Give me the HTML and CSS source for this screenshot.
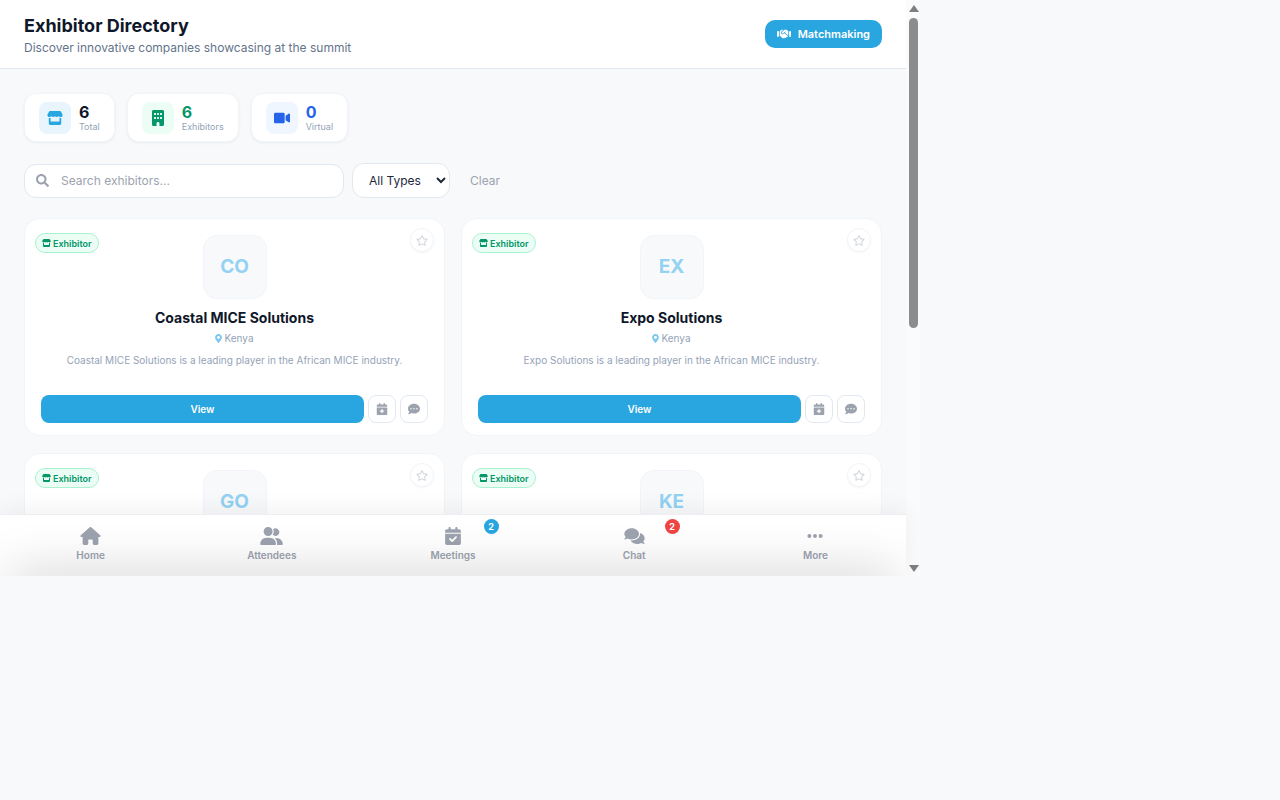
FILE: index.html
```html
<!DOCTYPE html>
<html lang="en">
<head>
    <meta charset="UTF-8">
    <meta name="viewport" content="width=device-width, initial-scale=1.0">
    <title>Exhibitor Directory</title>
    <link rel="stylesheet" href="styles.css">
</head>
<body>
    <svg class="icon-defs" aria-hidden="true">
        <symbol id="i-store" viewBox="0 0 576 512"><path d="M547.600 103.800L490.300 13.100C485.200 5 476.100 0 466.400 0H109.600C99.900 0 90.800 5 85.700 13.100L28.300 103.800c-29.600 46.800-3.400 111.900 51.900 119.400c4 .5 8.100 .8 12.100 .8c26.100 0 49.300-11.400 65.200-29c15.900 17.600 39.100 29 65.200 29c26.100 0 49.300-11.400 65.200-29c15.900 17.600 39.100 29 65.200 29c26.200 0 49.300-11.400 65.200-29c16 17.600 39.100 29 65.200 29c4.100 0 8.100-.3 12.100-.8c55.500-7.400 81.800-72.500 52.100-119.400zM499.700 254.900l-.1 0c-5.300 .7-10.700 1.100-16.200 1.100c-12.400 0-24.300-1.900-35.400-5.300V384H128V250.600c-11.200 3.500-23.200 5.400-35.600 5.400c-5.500 0-11-.4-16.300-1.100l-.1 0c-4.100-.6-8.100-1.300-12-2.300V384v64c0 35.300 28.700 64 64 64H448c35.300 0 64-28.700 64-64V384 252.600c-4 1-8 1.800-12.300 2.300z"/></symbol>
        <symbol id="i-building" viewBox="0 0 384 512"><path d="M48 0C21.500 0 0 21.500 0 48V464c0 26.500 21.500 48 48 48h96V432c0-26.500 21.500-48 48-48s48 21.500 48 48v80h96c26.500 0 48-21.500 48-48V48c0-26.500-21.500-48-48-48H48zM64 240c0-8.800 7.200-16 16-16h32c8.800 0 16 7.200 16 16v32c0 8.800-7.200 16-16 16H80c-8.800 0-16-7.200-16-16V240zm112-16h32c8.800 0 16 7.200 16 16v32c0 8.800-7.200 16-16 16H176c-8.800 0-16-7.200-16-16V240c0-8.800 7.200-16 16-16zm80 16c0-8.800 7.200-16 16-16h32c8.800 0 16 7.200 16 16v32c0 8.800-7.200 16-16 16H272c-8.800 0-16-7.200-16-16V240zM80 96h32c8.800 0 16 7.200 16 16v32c0 8.800-7.200 16-16 16H80c-8.800 0-16-7.200-16-16V112c0-8.800 7.200-16 16-16zm80 16c0-8.800 7.200-16 16-16h32c8.800 0 16 7.200 16 16v32c0 8.800-7.200 16-16 16H176c-8.800 0-16-7.200-16-16V112zM272 96h32c8.800 0 16 7.200 16 16v32c0 8.800-7.200 16-16 16H272c-8.800 0-16-7.200-16-16V112c0-8.800 7.200-16 16-16z"/></symbol>
        <symbol id="i-video" viewBox="0 0 576 512"><path d="M336.200 64H47.800C21.400 64 0 85.400 0 111.800v288.400C0 426.600 21.400 448 47.800 448h288.400c26.400 0 47.800-21.400 47.800-47.800V111.800c0-26.400-21.400-47.800-47.800-47.800zm189.400 37.700L416 177.300v157.400l109.600 75.500c21.200 14.600 50.400-.3 50.400-25.800V127.500c0-25.400-29.100-40.400-50.400-25.800z"/></symbol>
        <symbol id="i-search" viewBox="0 0 512 512"><path d="M505 442.700L405.300 343c-4.500-4.500-10.600-7-17-7H372c27.600-35.300 44-79.700 44-128C416 93.100 322.900 0 208 0S0 93.100 0 208s93.100 208 208 208c48.300 0 92.700-16.400 128-44v16.300c0 6.400 2.500 12.500 7 17l99.700 99.700c9.400 9.400 24.600 9.400 33.900 0l28.300-28.300c9.400-9.400 9.400-24.600.1-34zM208 336c-70.700 0-128-57.200-128-128 0-70.700 57.200-128 128-128 70.700 0 128 57.200 128 128 0 70.700-57.200 128-128 128z"/></symbol>
        <symbol id="i-star" viewBox="0 0 576 512"><path d="M528.100 171.500L382 150.200 316.700 17.800c-11.700-23.600-45.600-23.900-57.400 0L194 150.200 47.900 171.500c-26.200 3.800-36.700 36.100-17.700 54.600l105.700 103-25 145.500c-4.500 26.300 23.200 46 46.400 33.700L288 439.600l130.700 68.700c23.200 12.200 50.900-7.400 46.400-33.700l-25-145.500 105.700-103c19-18.500 8.500-50.800-17.700-54.600zM388.600 312.300l23.700 138.400L288 385.400l-124.300 65.300 23.700-138.400-100.600-98 139-20.200 62.200-126 62.200 126 139 20.200-100.600 98z"/></symbol>
        <symbol id="i-marker" viewBox="0 0 384 512"><path d="M172.268 501.670C26.970 291.031 0 268.413 0 192 0 85.961 85.961 0 192 0s192 85.961 192 192c0 76.413-26.970 99.031-172.268 309.670-9.535 13.774-29.930 13.773-39.464 0zM192 272c44.183 0 80-35.817 80-80s-35.817-80-80-80-80 35.817-80 80 35.817 80 80 80z"/></symbol>
        <symbol id="i-calendar-plus" viewBox="0 0 448 512"><path d="M96 32V64H48C21.500 64 0 85.500 0 112v48H448V112c0-26.500-21.500-48-48-48H352V32c0-17.700-14.300-32-32-32s-32 14.300-32 32V64H160V32c0-17.700-14.300-32-32-32S96 14.300 96 32zM448 192H0V464c0 26.500 21.500 48 48 48H400c26.500 0 48-21.500 48-48V192zM224 248c13.300 0 24 10.700 24 24v48h48c13.300 0 24 10.700 24 24s-10.700 24-24 24H248v48c0 13.300-10.700 24-24 24s-24-10.700-24-24V368H152c-13.300 0-24-10.700-24-24s10.700-24 24-24h48V272c0-13.300 10.700-24 24-24z"/></symbol>
        <symbol id="i-comment-dots" viewBox="0 0 512 512"><path d="M256 32C114.600 32 0 125.100 0 240c0 49.600 21.400 95 57 130.700C44.500 421.100 2.700 466 2.200 466.500c-2.200 2.300-2.800 5.700-1.500 8.700S4.800 480 8 480c66.300 0 116-31.800 140.600-51.400 32.700 12.300 69 19.400 107.400 19.400 141.400 0 256-93.100 256-208S397.400 32 256 32zM128 272c-17.700 0-32-14.300-32-32s14.300-32 32-32 32 14.300 32 32-14.300 32-32 32zm128 0c-17.700 0-32-14.300-32-32s14.300-32 32-32 32 14.300 32 32-14.300 32-32 32zm128 0c-17.700 0-32-14.300-32-32s14.300-32 32-32 32 14.300 32 32-14.300 32-32 32z"/></symbol>
        <symbol id="i-handshake" viewBox="0 0 640 512"><path d="M434.700 64h-85.900c-8 0-15.700 3-21.600 8.400l-98.300 90c-.1.1-.2.3-.3.400-16.600 15.600-16.300 40.500-2.100 56 12.700 13.900 39.400 17.600 56.100 2.700.1-.1.300-.1.400-.2l79.900-73.200c6.500-5.900 16.700-5.500 22.600 1 6 6.500 5.500 16.600-1 22.600l-26.100 23.900L504 313.800c2.900 2.400 5.500 5 7.900 7.700V128l-54.600-54.600c-5.900-6-14.100-9.400-22.600-9.400zM544 128.200v223.900c0 17.700 14.300 32 32 32h64V128.200h-96zm48 223.900c-8.800 0-16-7.200-16-16s7.200-16 16-16 16 7.200 16 16-7.200 16-16 16zM0 384h64c17.700 0 32-14.300 32-32V128.200H0V384zm48-63.900c8.800 0 16 7.200 16 16s-7.200 16-16 16-16-7.200-16-16c0-8.900 7.200-16 16-16zm435.900 18.600L334.600 217.500l-30 27.500c-29.700 27.100-75.200 24.500-101.700-4.400-26.900-29.400-24.800-74.900 4.400-101.700L289.100 64h-83.800c-8.500 0-16.600 3.400-22.600 9.400L128 128v223.900h18.300l90.500 81.900c27.400 22.300 67.700 18.100 90-9.300l.2-.2 17.900 15.500c15.900 13 39.400 10.500 52.300-5.400l31.400-38.600 5.400 4.400c13.700 11.100 33.900 9.100 45-4.700l9.500-11.700c11.200-13.800 9.100-33.900-4.600-45.100z"/></symbol>
        <symbol id="i-home" viewBox="0 0 576 512"><path d="M575.800 255.500c0 18-15 32.100-32 32.100h-32l.7 160.200c0 2.700-.2 5.400-.5 8.100V472c0 22.100-17.900 40-40 40H456c-1.100 0-2.200 0-3.300-.1c-1.400 .1-2.800 .1-4.200 .1H416 392c-22.100 0-40-17.900-40-40V448 384c0-17.700-14.300-32-32-32H256c-17.700 0-32 14.300-32 32v64 24c0 22.100-17.900 40-40 40H160 128.100c-1.500 0-3-.1-4.500-.2c-1.200 .1-2.400 .2-3.600 .2H104c-22.100 0-40-17.900-40-40V360c0-.9 0-1.900 .1-2.800V287.600H32c-18 0-32-14-32-32.100c0-9 3-17 10-24L266.400 8c7-7 15-8 22-8s15 2 21 7L564.800 231.500c8 7 12 15 11 24z"/></symbol>
        <symbol id="i-users" viewBox="0 0 640 512"><path d="M96 128a128 128 0 1 1 256 0A128 128 0 1 1 96 128zM0 482.300C0 383.800 79.800 304 178.300 304h91.400C368.200 304 448 383.800 448 482.300c0 16.400-13.300 29.700-29.700 29.700H29.700C13.300 512 0 498.700 0 482.300zM609.300 512H471.400c5.400-9.400 8.600-20.300 8.600-32v-8c0-60.700-27.100-115.200-69.800-151.800c2.400-.1 4.700-.2 7.100-.2h61.400C567.800 320 640 392.200 640 481.300c0 17-13.800 30.700-30.700 30.700zM432 256c-31 0-59-12.600-79.300-32.900C372.400 196.500 384 163.600 384 128c0-26.800-6.600-52.100-18.300-74.300C384.300 40.100 407.200 32 432 32c61.900 0 112 50.100 112 112s-50.100 112-112 112z"/></symbol>
        <symbol id="i-calendar-check" viewBox="0 0 448 512"><path d="M128 0c17.700 0 32 14.300 32 32V64H288V32c0-17.700 14.300-32 32-32s32 14.300 32 32V64h48c26.500 0 48 21.500 48 48v48H0V112C0 85.500 21.500 64 48 64H96V32c0-17.700 14.300-32 32-32zM0 192H448V464c0 26.500-21.500 48-48 48H48c-26.500 0-48-21.500-48-48V192zM329 305c9.400-9.400 9.400-24.600 0-33.900s-24.600-9.400-33.900 0l-95 95-47-47c-9.400-9.400-24.600-9.400-33.900 0s-9.400 24.600 0 33.900l64 64c9.400 9.400 24.600 9.400 33.900 0L329 305z"/></symbol>
        <symbol id="i-comments" viewBox="0 0 576 512"><path d="M416 192c0-88.400-93.100-160-208-160S0 103.600 0 192c0 34.300 14.100 65.900 38 92-13.400 30.200-35.500 54.200-35.800 54.500-2.200 2.300-2.800 5.700-1.500 8.700S4.800 352 8 352c36.600 0 66.900-12.300 88.700-25 32.200 15.700 70.300 25 111.300 25 114.900 0 208-71.600 208-160zm122 220c23.900-26 38-57.700 38-92 0-66.900-53.500-124.200-129.300-148.100.9 6.600 1.300 13.300 1.300 20.100 0 105.900-107.700 192-240 192-10.800 0-21.300-.8-31.700-1.900C207.800 439.600 281.800 480 368 480c41 0 79.100-9.200 111.300-25 21.800 12.700 52.100 25 88.700 25 3.200 0 6.100-1.900 7.300-4.800 1.300-2.900.7-6.300-1.500-8.700-.3-.3-22.400-24.200-35.800-54.500z"/></symbol>
        <symbol id="i-ellipsis" viewBox="0 0 448 512"><path d="M8 256a56 56 0 1 1 112 0A56 56 0 1 1 8 256zm160 0a56 56 0 1 1 112 0A56 56 0 1 1 168 256zm216-56a56 56 0 1 1 0 112 56 56 0 1 1 0-112z"/></symbol>
    </svg>

    <div class="frame">
        <div class="scroller">
            <header class="page-header">
                <div>
                    <h1>Exhibitor Directory</h1>
                    <p>Discover innovative companies showcasing at the summit</p>
                </div>
                <a class="match-btn" href="#"><svg class="match-icon"><use href="#i-handshake"/></svg>Matchmaking</a>
            </header>

            <main class="content">
                <div class="stats">
                    <div class="stat">
                        <div class="stat-icon sky"><svg><use href="#i-store"/></svg></div>
                        <div><div class="stat-num">6</div><div class="stat-label">Total</div></div>
                    </div>
                    <div class="stat">
                        <div class="stat-icon green"><svg><use href="#i-building"/></svg></div>
                        <div><div class="stat-num num-green">6</div><div class="stat-label">Exhibitors</div></div>
                    </div>
                    <div class="stat">
                        <div class="stat-icon blue"><svg><use href="#i-video"/></svg></div>
                        <div><div class="stat-num num-blue">0</div><div class="stat-label">Virtual</div></div>
                    </div>
                </div>

                <div class="filters">
                    <div class="search">
                        <svg><use href="#i-search"/></svg>
                        <input type="text" placeholder="Search exhibitors...">
                    </div>
                    <select class="type-select">
                        <option>All Types</option>
                        <option>Exhibitor</option>
                        <option>Virtual</option>
                    </select>
                    <button class="clear-btn">Clear</button>
                </div>

                <div class="grid">
                    <article class="card">
                        <span class="badge"><svg><use href="#i-store"/></svg>Exhibitor</span>
                        <button class="star"><svg><use href="#i-star"/></svg></button>
                        <div class="logo">CO</div>
                        <h2>Coastal MICE Solutions</h2>
                        <div class="location"><svg><use href="#i-marker"/></svg>Kenya</div>
                        <p class="desc">Coastal MICE Solutions is a leading player in the African MICE industry.</p>
                        <div class="actions">
                            <a class="view-btn" href="#">View</a>
                            <button class="square-btn"><svg><use href="#i-calendar-plus"/></svg></button>
                            <button class="square-btn"><svg><use href="#i-comment-dots"/></svg></button>
                        </div>
                    </article>
                    <article class="card">
                        <span class="badge"><svg><use href="#i-store"/></svg>Exhibitor</span>
                        <button class="star"><svg><use href="#i-star"/></svg></button>
                        <div class="logo">EX</div>
                        <h2>Expo Solutions</h2>
                        <div class="location"><svg><use href="#i-marker"/></svg>Kenya</div>
                        <p class="desc">Expo Solutions is a leading player in the African MICE industry.</p>
                        <div class="actions">
                            <a class="view-btn" href="#">View</a>
                            <button class="square-btn"><svg><use href="#i-calendar-plus"/></svg></button>
                            <button class="square-btn"><svg><use href="#i-comment-dots"/></svg></button>
                        </div>
                    </article>
                    <article class="card">
                        <span class="badge"><svg><use href="#i-store"/></svg>Exhibitor</span>
                        <button class="star"><svg><use href="#i-star"/></svg></button>
                        <div class="logo">GO</div>
                    </article>
                    <article class="card">
                        <span class="badge"><svg><use href="#i-store"/></svg>Exhibitor</span>
                        <button class="star"><svg><use href="#i-star"/></svg></button>
                        <div class="logo">KE</div>
                    </article>
                </div>
            </main>
        </div>

        <div class="scrollbar">
            <div class="arrow-up"></div>
            <div class="thumb"></div>
            <div class="arrow-down"></div>
        </div>

        <nav class="bottom-nav">
            <a class="nav-item" href="#"><svg class="nav-home"><use href="#i-home"/></svg>Home</a>
            <a class="nav-item" href="#"><svg class="nav-users"><use href="#i-users"/></svg>Attendees</a>
            <a class="nav-item" href="#"><svg class="nav-cal"><use href="#i-calendar-check"/></svg>Meetings<span class="nav-badge sky-badge">2</span></a>
            <a class="nav-item" href="#"><svg class="nav-chat"><use href="#i-comments"/></svg>Chat<span class="nav-badge red-badge">2</span></a>
            <a class="nav-item" href="#"><svg class="nav-more"><use href="#i-ellipsis"/></svg>More</a>
        </nav>
    </div>
</body>
</html>
```

FILE: styles.css
```css
* {
    box-sizing: border-box;
}

body {
    margin: 0;
    padding: 0;
    background: #f8f9fb;
    font-family: 'Inter', sans-serif;
    color: #0f172a;
}

a {
    text-decoration: none;
}

button {
    font-family: inherit;
    cursor: pointer;
}

svg {
    fill: currentColor;
    display: block;
}

.icon-defs {
    display: none;
}

.frame {
    position: relative;
    display: flex;
    width: 920px;
    height: 576px;
    overflow: hidden;
}

.scroller {
    flex: 1;
    height: 100%;
    overflow: hidden;
    background: #f8f9fb;
}

.scrollbar {
    display: flex;
    flex-direction: column;
    align-items: center;
    width: 14px;
    padding: 5px 0 4px 1px;
    background: #fbfbfb;
}

.arrow-up,
.arrow-down {
    width: 0;
    height: 0;
    border-left: 5px solid transparent;
    border-right: 5px solid transparent;
}

.arrow-up {
    border-bottom: 7px solid #7f7f7f;
}

.arrow-down {
    margin-top: auto;
    border-top: 7px solid #7f7f7f;
}

.thumb {
    width: 9px;
    height: 310px;
    margin-top: 6px;
    background: #8c8c8c;
    border-radius: 5px;
}

.page-header {
    display: flex;
    justify-content: space-between;
    align-items: center;
    height: 69px;
    padding: 2px 24px 0;
    background: #ffffff;
    border-bottom: 1px solid #e2e8f0;
}

.page-header h1 {
    margin: 0 0 2px;
    font-size: 18px;
    line-height: 24px;
    font-weight: 700;
}

.page-header p {
    margin: 0;
    font-size: 12px;
    line-height: 16px;
    color: #64748b;
}

.match-btn {
    display: flex;
    align-items: center;
    gap: 7px;
    height: 28px;
    margin-top: -2px;
    padding: 0 12px;
    background: #29a5df;
    color: #ffffff;
    border-radius: 10px;
    font-size: 11px;
    font-weight: 600;
}

.match-icon {
    width: 14px;
    height: 12px;
}

.content {
    padding: 24px 24px 100px;
}

.stats {
    display: flex;
    gap: 12px;
    margin-bottom: 21px;
}

.stat {
    display: flex;
    align-items: center;
    gap: 8px;
    height: 49px;
    padding: 0 14px;
    background: #ffffff;
    border: 1px solid #f1f5f9;
    border-radius: 12px;
    box-shadow: 0 1px 3px rgba(0, 0, 0, 0.06);
}

.stat-icon {
    display: flex;
    align-items: center;
    justify-content: center;
    width: 32px;
    height: 32px;
    border-radius: 8px;
}

.stat-icon svg {
    width: 16px;
    height: 16px;
}

.sky {
    background: #e8f5fc;
    color: #29a5df;
}

.green {
    background: #ecfdf5;
    color: #059669;
}

.blue {
    background: #eff6ff;
    color: #2563eb;
}

.stat-num {
    font-size: 16px;
    line-height: 18px;
    font-weight: 700;
}

.num-green {
    color: #059669;
}

.num-blue {
    color: #2563eb;
}

.stat-label {
    font-size: 9px;
    line-height: 11px;
    color: #94a3b8;
}

.filters {
    display: flex;
    align-items: center;
    gap: 8px;
    margin-bottom: 20px;
}

.search {
    display: flex;
    align-items: center;
    gap: 12px;
    width: 320px;
    height: 34px;
    padding: 0 11px;
    background: #ffffff;
    border: 1px solid #e2e8f0;
    border-radius: 12px;
    color: #9ca3af;
}

.search svg {
    width: 13px;
    height: 13px;
}

.search input {
    flex: 1;
    min-width: 0;
    padding: 0;
    border: none;
    outline: none;
    background: transparent;
    font-family: inherit;
    font-size: 12px;
    color: #0f172a;
}

.search input::placeholder {
    color: #9ca3af;
}

.type-select {
    width: 98px;
    height: 35px;
    padding: 0 12px;
    background: #ffffff;
    border: 1px solid #e2e8f0;
    border-radius: 12px;
    font-family: inherit;
    font-size: 12px;
    color: #1e293b;
}

.clear-btn {
    padding: 0 12px;
    border: none;
    background: transparent;
    font-size: 12px;
    color: #9ca3af;
}

.grid {
    display: grid;
    grid-template-columns: 1fr 1fr;
    column-gap: 16px;
    row-gap: 17px;
}

.card {
    position: relative;
    display: flex;
    flex-direction: column;
    align-items: center;
    height: 218px;
    padding: 16px 16px 12px;
    background: #ffffff;
    border: 1px solid #f1f5f9;
    border-radius: 16px;
}

.badge {
    position: absolute;
    top: 14px;
    left: 10px;
    display: flex;
    align-items: center;
    gap: 2px;
    height: 20px;
    padding: 0 6px;
    background: #ecfdf5;
    border: 1px solid #a7f3d0;
    border-radius: 10px;
    font-size: 9px;
    font-weight: 600;
    color: #059669;
}

.badge svg {
    width: 9px;
    height: 8px;
}

.star {
    position: absolute;
    top: 9px;
    right: 10px;
    display: flex;
    align-items: center;
    justify-content: center;
    width: 24px;
    height: 24px;
    padding: 0;
    background: #ffffff;
    border: 1px solid #f1f5f9;
    border-radius: 50%;
    box-shadow: 0 1px 2px rgba(0, 0, 0, 0.04);
    color: #d1d5db;
}

.star svg {
    width: 12px;
    height: 11px;
}

.logo {
    display: flex;
    align-items: center;
    justify-content: center;
    flex-shrink: 0;
    width: 64px;
    height: 64px;
    margin-bottom: 10px;
    padding-bottom: 1px;
    background: #f8f9fb;
    border: 1px solid #f1f5f9;
    border-radius: 14px;
    font-size: 19px;
    font-weight: 700;
    color: #93d2f2;
}

.card h2 {
    margin: 0 0 4px;
    font-size: 14px;
    line-height: 18px;
    font-weight: 700;
}

.location {
    display: flex;
    align-items: center;
    gap: 2px;
    margin-bottom: 8px;
    font-size: 10px;
    line-height: 14px;
    color: #94a3b8;
}

.location svg {
    width: 7px;
    height: 9px;
    color: #7cc8ee;
}

.desc {
    margin: 0;
    font-size: 10px;
    line-height: 14px;
    color: #94a3b8;
}

.actions {
    display: flex;
    align-items: center;
    gap: 4px;
    width: 100%;
    margin-top: auto;
}

.view-btn {
    flex: 1;
    height: 28px;
    line-height: 28px;
    background: #29a5df;
    border-radius: 8px;
    text-align: center;
    font-size: 10px;
    font-weight: 600;
    color: #ffffff;
}

.square-btn {
    display: flex;
    align-items: center;
    justify-content: center;
    width: 28px;
    height: 28px;
    padding: 0;
    background: #ffffff;
    border: 1px solid #e2e8f0;
    border-radius: 8px;
    color: #9ca3af;
}

.square-btn svg {
    width: 12px;
    height: 12px;
}

/* bottom nav sits over the scrolling list */
.bottom-nav {
    position: absolute;
    left: 0;
    bottom: 0;
    display: flex;
    width: 906px;
    height: 62px;
    background: #ffffff;
    border-top: 1px solid #eceef2;
    box-shadow: 0 -4px 24px rgba(0, 0, 0, 0.06);
    overflow: hidden;
}

.bottom-nav::after {
    content: "";
    position: absolute;
    left: 10px;
    right: 10px;
    top: 100%;
    height: 20px;
    box-shadow: 0 0 50px rgba(0, 0, 0, 0.28);
}

.nav-item {
    position: relative;
    flex: 1;
    display: flex;
    flex-direction: column;
    align-items: center;
    justify-content: flex-end;
    padding-bottom: 14px;
    font-size: 10px;
    line-height: 13px;
    font-weight: 600;
    color: #9ca3af;
}

.nav-item svg {
    height: 18px;
    margin-bottom: 4px;
}

.nav-home {
    width: 21px;
}

.nav-users {
    width: 23px;
}

.nav-cal {
    width: 16px;
}

.nav-chat {
    width: 23px;
}

.nav-more {
    width: 16px;
}

.nav-badge {
    position: absolute;
    top: 4px;
    left: 50%;
    margin-left: 30.5px;
    width: 15px;
    height: 15px;
    border-radius: 50%;
    text-align: center;
    font-size: 9px;
    line-height: 15px;
    font-weight: 700;
    color: #ffffff;
}

.sky-badge {
    background: #29a5df;
}

.red-badge {
    background: #ef4444;
}
```
